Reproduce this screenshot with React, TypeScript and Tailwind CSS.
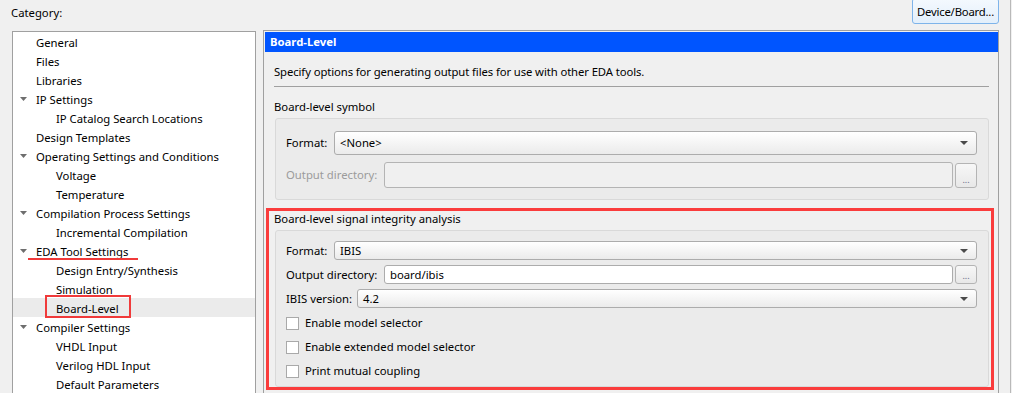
import React from "react";

type Item = { t: string; l: number; arrow?: boolean; underline?: boolean; selected?: boolean };

const items: Item[] = [
  { t: "General", l: 0 },
  { t: "Files", l: 0 },
  { t: "Libraries", l: 0 },
  { t: "IP Settings", l: 0, arrow: true },
  { t: "IP Catalog Search Locations", l: 1 },
  { t: "Design Templates", l: 0 },
  { t: "Operating Settings and Conditions", l: 0, arrow: true },
  { t: "Voltage", l: 1 },
  { t: "Temperature", l: 1 },
  { t: "Compilation Process Settings", l: 0, arrow: true },
  { t: "Incremental Compilation", l: 1 },
  { t: "EDA Tool Settings", l: 0, arrow: true, underline: true },
  { t: "Design Entry/Synthesis", l: 1 },
  { t: "Simulation", l: 1 },
  { t: "Board-Level", l: 1, selected: true },
  { t: "Compiler Settings", l: 0, arrow: true },
  { t: "VHDL Input", l: 1 },
  { t: "Verilog HDL Input", l: 1 },
  { t: "Default Parameters", l: 1 },
];

function TreeArrow() {
  return (
    <svg width="7" height="4" viewBox="0 0 7 4">
      <path d="M0 0H7L3.5 4Z" fill="#6e6e6e" />
    </svg>
  );
}

function ComboArrow() {
  return (
    <svg width="8" height="4" viewBox="0 0 8 4">
      <path d="M0 0H8L4 4Z" fill="#4a4a4a" />
    </svg>
  );
}

function Combo({ text, h }: { text: string; h: string }) {
  return (
    <div
      className={`flex flex-1 items-center justify-between rounded-[3px] border border-[#acacac] bg-linear-to-b from-white to-[#ebebeb] pl-[5px] pr-[8px] ${h}`}
    >
      <span>{text}</span>
      <ComboArrow />
    </div>
  );
}

function Browse({ h }: { h: string }) {
  return (
    <div
      className={`ml-[2px] flex w-[22px] items-end justify-center rounded-[3px] border border-[#b4b4b4] bg-linear-to-b from-[#f7f7f7] to-[#e8e8e8] pb-[3px] text-[9px] leading-[9px] text-[#6a6a8a] ${h}`}
    >
      ...
    </div>
  );
}

function Checkbox({ label }: { label: string }) {
  return (
    <div className="flex h-[24px] items-center">
      <div className="h-[13px] w-[13px] border border-[#a9a9a9] bg-white" />
      <span className="ml-[6px]">{label}</span>
    </div>
  );
}

export default function App() {
  return (
    <div className="h-[393px] w-[1012px] overflow-hidden bg-[#f0f0f0] font-['Noto_Sans','DejaVu_Sans',sans-serif] text-[11.3px] leading-[16px] text-black">
      <div className="flex h-[393px] w-[1011px] flex-col overflow-hidden border-r border-[#b9b9b9]">
        {/* Top bar */}
        <div className="flex h-[30px] shrink-0 items-start justify-between pl-[11px] pr-[11px]">
          <span className="mt-[5px]">Category:</span>
          <div className="mt-[-2px] flex h-[26px] w-[87px] items-center justify-center whitespace-nowrap rounded-[3px] border border-[#7eb4ea] bg-linear-to-b from-[#f4f9fe] to-[#e3effb] pt-[2px] tracking-[-0.2px]">
            Device/Board...
          </div>
        </div>

        {/* Main */}
        <div className="flex min-h-0 flex-1 items-start overflow-hidden">
          {/* Tree */}
          <div className="ml-[12px] mt-[1px] h-[400px] w-[244px] shrink-0 border border-[#a0a0a0] bg-white">
            {items.map((it) => (
              <div
                key={it.t}
                className={`relative flex h-[19px] items-center ${it.selected ? "bg-[#ebebeb]" : ""}`}
              >
                <span className="flex w-[23px] items-center pl-[7px] pt-[1px]">{it.arrow ? <TreeArrow /> : null}</span>
                <span className={`whitespace-nowrap pt-[2px] ${it.l === 1 ? "pl-[20px]" : ""}`}>{it.t}</span>
                {it.underline && (
                  <span className="absolute left-[15px] top-[17px] h-[2px] w-[110px] bg-[#f03a3a]" />
                )}
                {it.selected && (
                  <span className="absolute left-[32px] top-[-3px] h-[23px] w-[86px] border-2 border-[#f03a3a]" />
                )}
              </div>
            ))}
          </div>

          {/* Right panel */}
          <div className="ml-[7px] h-[400px] w-[736px] shrink-0 border border-[#a0a0a0] pl-[1px] pt-[1px]">
            <div className="flex h-[20px] items-center bg-[#0055ff] pl-[5px] font-bold text-white">
              Board-Level
            </div>
            <div className="pl-[9px] pr-[9px]">
              <div className="mt-[12px] whitespace-nowrap tracking-[-0.1px]">
                Specify options for generating output files for use with other EDA tools.
              </div>
              <div className="mt-[6px] h-[1px] bg-[#a0a0a0]" />
              <div className="mt-[12px]">Board-level symbol</div>
              <div className="ml-[1px] mt-[3px] h-[82px] rounded-[3px] border border-[#d9d9d9] bg-[#ebebeb] pl-[10px] pr-[11px] pt-[12px]">
                <div className="flex items-center">
                  <span className="w-[48px]">Format:</span>
                  <Combo text="<None>" h="h-[24px]" />
                </div>
                <div className="mt-[7px] flex items-center">
                  <span className="w-[98px] text-[#9b9b9b]">Output directory:</span>
                  <div className="h-[26px] flex-1 rounded-[3px] border border-[#b4b4b4] bg-[#f0f0f0]" />
                  <Browse h="h-[25px]" />
                </div>
              </div>

              <div className="relative mt-[9px]">
                <span className="pointer-events-none absolute left-[-8px] right-[-5px] top-[-1px] h-[182px] border-[3px] border-[#fa3c3c]" />
                <div className="pt-[2px]">Board-level signal integrity analysis</div>
                <div className="ml-[1px] mt-[3px] h-[157px] rounded-[3px] border border-[#d9d9d9] bg-[#ebebeb] pl-[10px] pr-[11px] pt-[10px]">
                  <div className="flex items-center">
                    <span className="w-[48px]">Format:</span>
                    <Combo text="IBIS" h="h-[19px]" />
                  </div>
                  <div className="mt-[5px] flex items-center">
                    <span className="w-[98px]">Output directory:</span>
                    <div className="flex h-[19px] flex-1 items-center rounded-[3px] border border-[#acacac] bg-white pl-[5px]">
                      board/ibis
                    </div>
                    <Browse h="h-[19px]" />
                  </div>
                  <div className="mt-[5px] flex items-center">
                    <span className="w-[71px]">IBIS version:</span>
                    <Combo text="4.2" h="h-[19px]" />
                  </div>
                  <div className="mt-[3px]">
                    <Checkbox label="Enable model selector" />
                    <Checkbox label="Enable extended model selector" />
                    <Checkbox label="Print mutual coupling" />
                  </div>
                </div>
              </div>
            </div>
          </div>
        </div>
      </div>
    </div>
  );
}
